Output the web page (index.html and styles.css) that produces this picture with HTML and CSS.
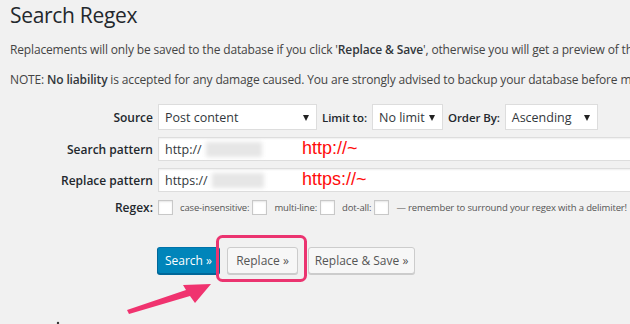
FILE: index.html
```html
<!DOCTYPE html>
<html lang="en">
<head>
  <meta charset="UTF-8" />
  <title>Search Regex</title>
  <link rel="stylesheet" href="styles.css">
</head>
<body>
  <div class="wrap">
    <h1>Search Regex</h1>
    <p>Replacements will only be saved to the database if you click '<strong>Replace &amp; Save</strong>', otherwise you will get a preview of the results.</p>
    <p>NOTE: <strong>No liability</strong> is accepted for any damage caused. You are strongly advised to backup your database before making any changes.</p>

    <form class="regex-form">
      <div class="row row-source">
        <label class="lbl">Source</label>
        <div class="ctl">
          <span class="select sel-source">Post content</span>
          <span class="mini-lbl">Limit to:</span>
          <span class="select sel-limit">No limit</span>
          <span class="mini-lbl">Order By:</span>
          <span class="select sel-order">Ascending</span>
        </div>
      </div>

      <div class="row row-text">
        <label class="lbl">Search pattern</label>
        <div class="ctl">
          <div class="text-input">http://<span class="blur blur-1"></span></div>
          <span class="note-red">http://~</span>
        </div>
      </div>

      <div class="row row-text">
        <label class="lbl">Replace pattern</label>
        <div class="ctl">
          <div class="text-input">https://<span class="blur blur-2"></span></div>
          <span class="note-red">https://~</span>
        </div>
      </div>

      <div class="row row-regex">
        <label class="lbl">Regex:</label>
        <div class="ctl">
          <span class="check"></span>
          <span class="small">case-insensitive:</span>
          <span class="check"></span>
          <span class="small">multi-line:</span>
          <span class="check"></span>
          <span class="small">dot-all:</span>
          <span class="check"></span>
          <span class="small">&mdash; remember to surround your regex with a delimiter!</span>
        </div>
      </div>

      <div class="buttons">
        <span class="btn btn-primary">Search &raquo;</span>
        <span class="btn btn-replace">Replace &raquo;</span>
        <span class="btn btn-save">Replace &amp; Save &raquo;</span>
      </div>
    </form>
  </div>

  <!-- annotation layer drawn over the screenshot -->
  <svg class="marks" width="630" height="324" viewBox="0 0 630 324">
    <rect x="217.5" y="236.5" width="88" height="44" rx="5" fill="none" stroke="#eb3470" stroke-width="3"/>
    <polygon points="127,310 186,290 183,285 211,284 195,303 190,296 129,314" fill="#f0336f"/>
    <circle cx="58" cy="323" r="1.2" fill="#333"/>
  </svg>
</body>
</html>
```

FILE: styles.css
```css
* {
  box-sizing: border-box;
}

body {
  margin: 0;
  width: 630px;
  height: 324px;
  overflow: hidden;
  background: #f1f1f1;
  color: #444;
  font-family: 'Open Sans', 'Noto Sans', sans-serif;
  font-size: 12px;
  position: relative;
}

.wrap {
  padding-left: 10px;
}

h1 {
  margin: 0;
  padding-top: 1px;
  font-size: 21px;
  font-weight: 400;
  letter-spacing: -0.3px;
  line-height: 28px;
  color: #23282d;
}

p {
  margin: 0;
  white-space: nowrap;
  line-height: 18px;
  margin-top: 12px;
  letter-spacing: -0.15px;
}

p strong {
  font-weight: 600;
  color: #32373c;
}

.regex-form {
  margin-top: 15px;
}

.row {
  display: flex;
  align-items: center;
}

.lbl {
  width: 143px;
  flex: none;
  text-align: right;
  font-weight: 600;
  color: #23282d;
}

.ctl {
  display: flex;
  align-items: center;
  margin-left: 5px;
  position: relative;
}

/* selects */
.row-source {
  height: 26px;
}

.select {
  position: relative;
  display: flex;
  align-items: center;
  height: 26px;
  flex: none;
  background: #fff;
  border: 1px solid #ddd;
  font-size: 12.5px;
  color: #32373c;
  padding-left: 6px;
}

.select::after {
  content: "";
  position: absolute;
  right: 7px;
  top: 10px;
  border-left: 3px solid transparent;
  border-right: 3px solid transparent;
  border-top: 6px solid #222;
}

.sel-source { width: 159px; }
.sel-limit { width: 71px; }
.sel-order { width: 93px; }

.mini-lbl {
  font-weight: 600;
  font-size: 11.5px;
  letter-spacing: -0.1px;
  color: #23282d;
  margin: 0 5px 0 5px;
}

/* text fields */
.row-text {
  height: 24px;
  margin-top: 7px;
}

.row-text + .row-text {
  margin-top: 7px;
}

.text-input {
  display: flex;
  align-items: center;
  width: 520px;
  height: 24px;
  background: #fff;
  border: 1px solid #ddd;
  box-shadow: inset 0 1px 2px rgba(0, 0, 0, 0.07);
  padding-left: 6px;
  color: #32373c;
  font-size: 12.5px;
}

.blur {
  display: inline-block;
  height: 15px;
  background: #e6e6e6;
  filter: blur(2px);
}

.blur-1 { width: 56px; margin-left: 4px; }
.blur-2 { width: 52px; margin-left: 4px; }

.note-red {
  position: absolute;
  left: 144px;
  top: 1px;
  font-family: 'Liberation Sans', Arial, sans-serif;
  font-size: 18px;
  color: #ff0b0b;
  text-shadow: 0 0 2px #fff, 1px 1px 2px #fff;
}

/* regex options */
.row-regex {
  margin-top: 7px;
  height: 16px;
}

.check {
  display: inline-block;
  width: 15px;
  height: 15px;
  background: #fff;
  border: 1px solid #c8c8c8;
  box-shadow: inset 0 1px 2px rgba(0, 0, 0, 0.1);
  flex: none;
}

.small {
  font-size: 9.5px;
  letter-spacing: -0.15px;
  color: #555;
  margin: 0 3px 0 7px;
  white-space: nowrap;
}

/* buttons */
.buttons {
  display: flex;
  margin: 32px 0 0 147px;
}

.btn {
  display: inline-flex;
  align-items: center;
  justify-content: center;
  height: 27px;
  border-radius: 3px;
  border: 1px solid #ccc;
  background: #f7f7f7;
  color: #555;
  box-shadow: 0 1px 0 #ccc;
  white-space: nowrap;
}

.btn-primary {
  width: 63px;
  background: #0085ba;
  border-color: #0073aa #006799 #006799;
  box-shadow: 0 1px 0 #006799;
  color: #fff;
}

.btn-replace {
  width: 71px;
  margin-left: 7px;
}

.btn-save {
  width: 107px;
  margin-left: 10px;
}

.marks {
  position: absolute;
  left: 0;
  top: 0;
  pointer-events: none;
}
```
